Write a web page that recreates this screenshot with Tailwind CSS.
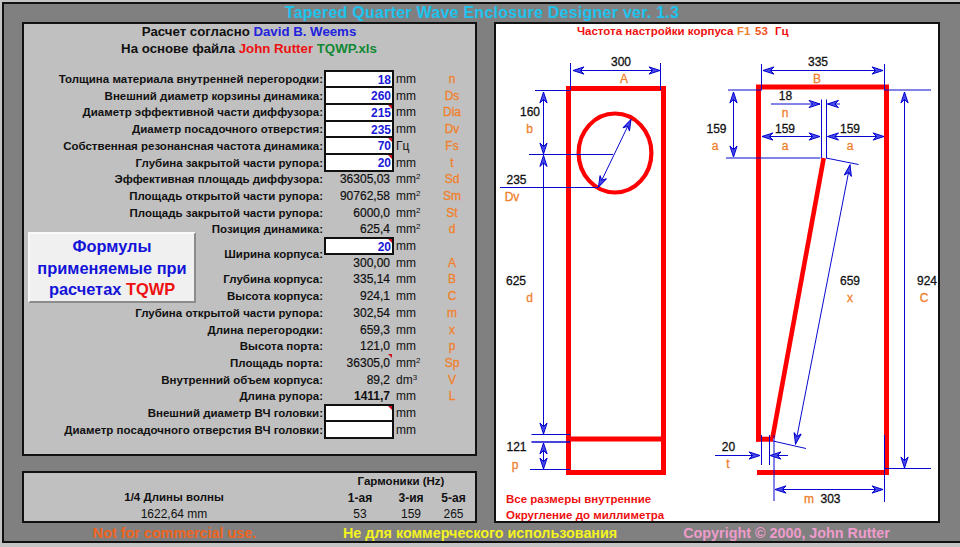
<!doctype html>
<html><head><meta charset="utf-8"><script src="https://cdn.jsdelivr.net/npm/@tailwindcss/browser@4"></script></head>
<body class="m-0 overflow-hidden">
<div class="w-[960px] h-[547px] overflow-hidden bg-[#c4c4c4] pt-[2px] pl-[2px] pb-[4px] font-['Liberation_Sans',sans-serif] text-[12px] text-[#111]">
<div class="h-[541px] border-t-2 border-l-2 border-b-2 border-[#111] bg-[#808080] flex flex-col">
  <div class="h-[18px] shrink-0 flex items-center justify-center text-[16px] font-bold text-[#1cc3ee] tracking-[0.25px]">Tapered Quarter Wave Enclosure Designer ver. 1.3</div>
  <div class="flex gap-[17px] pl-[18px] h-[501px] shrink-0">
    <div class="w-[455px] flex flex-col gap-[15px]">
      <div class="relative h-[434px] border-2 border-[#111] bg-[#c0c0c0]">
        <div class="h-[46.65px] text-[13.25px] font-bold text-center leading-[16.5px] pr-[1px]">
          <div>Расчет согласно <span class="text-[#2222dd]">David B. Weems</span></div>
          <div>На основе файла <span class="text-[#ee1111]">John Rutter</span> <span class="text-[#118833]">TQWP.xls</span></div>
        </div>
        <div class="grid grid-cols-[301px_68px_37px_44px] auto-rows-[16.71px] items-center leading-[16px]">
          <div class="text-right pr-[2px] font-bold text-[11.5px]">Толщина материала внутренней перегородки:</div><div class="relative -m-[1px] h-[18.7px] border-2 border-[#111] bg-white text-right pr-[1px] font-bold text-[#1a1ad8]">18</div><div class="pl-[3px]">mm</div><div class="text-center [-webkit-text-stroke:0.3px] text-[#f0802c]">n</div>
          <div class="text-right pr-[2px] font-bold text-[11.5px]">Внешний диаметр корзины динамика:</div><div class="relative -m-[1px] h-[18.7px] border-2 border-[#111] bg-white text-right pr-[1px] font-bold text-[#1a1ad8]">260</div><div class="pl-[3px]">mm</div><div class="text-center [-webkit-text-stroke:0.3px] text-[#f0802c]">Ds</div>
          <div class="text-right pr-[2px] font-bold text-[11.5px]">Диаметр эффективной части диффузора:</div><div class="relative -m-[1px] h-[18.7px] border-2 border-[#111] bg-white text-right pr-[1px] font-bold text-[#1a1ad8]">215<span class="absolute top-0 right-0 w-0 h-0 border-t-[4px] border-l-[4px] border-t-[#d01020] border-l-transparent"></span></div><div class="pl-[3px]">mm</div><div class="text-center [-webkit-text-stroke:0.3px] text-[#f0802c]">Dia</div>
          <div class="text-right pr-[2px] font-bold text-[11.5px]">Диаметр посадочного отверстия:</div><div class="relative -m-[1px] h-[18.7px] border-2 border-[#111] bg-white text-right pr-[1px] font-bold text-[#1a1ad8]">235</div><div class="pl-[3px]">mm</div><div class="text-center [-webkit-text-stroke:0.3px] text-[#f0802c]">Dv</div>
          <div class="text-right pr-[2px] font-bold text-[11.5px]">Собственная резонансная частота динамика:</div><div class="relative -m-[1px] h-[18.7px] border-2 border-[#111] bg-white text-right pr-[1px] font-bold text-[#1a1ad8]">70<span class="absolute top-0 right-0 w-0 h-0 border-t-[4px] border-l-[4px] border-t-[#d01020] border-l-transparent"></span></div><div class="pl-[3px]">Гц</div><div class="text-center [-webkit-text-stroke:0.3px] text-[#f0802c]">Fs</div>
          <div class="text-right pr-[2px] font-bold text-[11.5px]">Глубина закрытой части рупора:</div><div class="relative -m-[1px] h-[18.7px] border-2 border-[#111] bg-white text-right pr-[1px] font-bold text-[#1a1ad8]">20<span class="absolute top-0 right-0 w-0 h-0 border-t-[4px] border-l-[4px] border-t-[#d01020] border-l-transparent"></span></div><div class="pl-[3px]">mm</div><div class="text-center [-webkit-text-stroke:0.3px] text-[#f0802c]">t</div>
          <div class="text-right pr-[2px] font-bold text-[11.5px]">Эффективная площадь диффузора:</div><div class="text-right pr-[3px] [-webkit-text-stroke:0.2px]">36305,03</div><div class="pl-[3px]">mm<sup class="text-[8px]">2</sup></div><div class="text-center [-webkit-text-stroke:0.3px] text-[#f0802c]">Sd</div>
          <div class="text-right pr-[2px] font-bold text-[11.5px]">Площадь открытой части рупора:</div><div class="text-right pr-[3px] [-webkit-text-stroke:0.2px]">90762,58</div><div class="pl-[3px]">mm<sup class="text-[8px]">2</sup></div><div class="text-center [-webkit-text-stroke:0.3px] text-[#f0802c]">Sm</div>
          <div class="text-right pr-[2px] font-bold text-[11.5px]">Площадь закрытой части рупора:</div><div class="text-right pr-[3px] [-webkit-text-stroke:0.2px]">6000,0</div><div class="pl-[3px]">mm<sup class="text-[8px]">2</sup></div><div class="text-center [-webkit-text-stroke:0.3px] text-[#f0802c]">St</div>
          <div class="text-right pr-[2px] font-bold text-[11.5px]">Позиция динамика:</div><div class="text-right pr-[3px] [-webkit-text-stroke:0.2px]">625,4</div><div class="pl-[3px]">mm<sup class="text-[8px]">2</sup></div><div class="text-center [-webkit-text-stroke:0.3px] text-[#f0802c]">d</div>
          <div class="row-span-2 text-right pr-[2px] font-bold text-[11.5px]">Ширина корпуса:</div><div class="relative -m-[1px] h-[18.7px] border-2 border-[#111] bg-white text-right pr-[1px] font-bold text-[#1a1ad8]">20<span class="absolute top-0 right-0 w-0 h-0 border-t-[4px] border-l-[4px] border-t-[#d01020] border-l-transparent"></span></div><div class="pl-[3px]">mm</div><div></div>
          <div class="text-right pr-[3px] [-webkit-text-stroke:0.2px]">300,00</div><div class="pl-[3px]">mm</div><div class="text-center [-webkit-text-stroke:0.3px] text-[#f0802c]">A</div>
          <div class="text-right pr-[2px] font-bold text-[11.5px]">Глубина корпуса:</div><div class="text-right pr-[3px] [-webkit-text-stroke:0.2px]">335,14</div><div class="pl-[3px]">mm</div><div class="text-center [-webkit-text-stroke:0.3px] text-[#f0802c]">B</div>
          <div class="text-right pr-[2px] font-bold text-[11.5px]">Высота корпуса:</div><div class="text-right pr-[3px] [-webkit-text-stroke:0.2px]">924,1</div><div class="pl-[3px]">mm</div><div class="text-center [-webkit-text-stroke:0.3px] text-[#f0802c]">C</div>
          <div class="text-right pr-[2px] font-bold text-[11.5px]">Глубина открытой части рупора:</div><div class="text-right pr-[3px] [-webkit-text-stroke:0.2px]">302,54</div><div class="pl-[3px]">mm</div><div class="text-center [-webkit-text-stroke:0.3px] text-[#f0802c]">m</div>
          <div class="text-right pr-[2px] font-bold text-[11.5px]">Длина перегородки:</div><div class="text-right pr-[3px] [-webkit-text-stroke:0.2px]">659,3</div><div class="pl-[3px]">mm</div><div class="text-center [-webkit-text-stroke:0.3px] text-[#f0802c]">x</div>
          <div class="text-right pr-[2px] font-bold text-[11.5px]">Высота порта:</div><div class="text-right pr-[3px] [-webkit-text-stroke:0.2px]">121,0</div><div class="pl-[3px]">mm</div><div class="text-center [-webkit-text-stroke:0.3px] text-[#f0802c]">p</div>
          <div class="text-right pr-[2px] font-bold text-[11.5px]">Площадь порта:</div><div class="relative text-right pr-[3px] [-webkit-text-stroke:0.2px]">36305,0<span class="absolute -top-[1px] right-[1px] w-0 h-0 border-t-[4px] border-l-[4px] border-t-[#d01020] border-l-transparent"></span></div><div class="pl-[3px]">mm<sup class="text-[8px]">2</sup></div><div class="text-center [-webkit-text-stroke:0.3px] text-[#f0802c]">Sp</div>
          <div class="text-right pr-[2px] font-bold text-[11.5px]">Внутренний объем корпуса:</div><div class="text-right pr-[3px] [-webkit-text-stroke:0.2px]">89,2</div><div class="pl-[3px]">dm<sup class="text-[8px]">3</sup></div><div class="text-center [-webkit-text-stroke:0.3px] text-[#f0802c]">V</div>
          <div class="text-right pr-[2px] font-bold text-[11.5px]">Длина рупора:</div><div class="text-right pr-[3px] font-bold">1411,7</div><div class="pl-[3px]">mm</div><div class="text-center [-webkit-text-stroke:0.3px] text-[#f0802c]">L</div>
          <div class="text-right pr-[2px] font-bold text-[11.5px]">Внешний диаметр ВЧ головки:</div><div class="relative -m-[1px] h-[18.7px] border-2 border-[#111] bg-white"><span class="absolute top-0 right-0 w-0 h-0 border-t-[4px] border-l-[4px] border-t-[#d01020] border-l-transparent"></span></div><div class="pl-[3px]">mm</div><div></div>
          <div class="text-right pr-[2px] font-bold text-[11.5px]">Диаметр посадочного отверстия ВЧ головки:</div><div class="relative -m-[1px] h-[18.7px] border-2 border-[#111] bg-white"></div><div class="pl-[3px]">mm</div><div></div>
        </div>
        <div class="absolute left-[4px] top-[208px] w-[168px] h-[71px] bg-[#f0f0f0] border-2 border-t-[#fafafa] border-l-[#fafafa] border-r-[#8c8c8c] border-b-[#8c8c8c] flex flex-col items-center justify-center pt-[2px] text-[16.4px] font-bold leading-[21.5px] text-[#1414d8]">
          <div>Формулы</div><div>применяемые при</div><div>расчетах <span class="text-[#ee1111]">TQWP</span></div>
        </div>
      </div>
      <div class="h-[52px] border-2 border-[#111] bg-[#c0c0c0] grid grid-cols-[300px_72px_30px_49px] grid-rows-[16px_16px_15px] items-center text-center pt-[1px]">
        <div></div><div class="col-span-3 font-bold text-[11.5px] pl-[3px]">Гармоники (Hz)</div>
        <div class="font-bold text-[11.5px]">1/4 Длины волны</div><div class="font-bold">1-ая</div><div class="font-bold">3-ия</div><div class="font-bold pl-[6px]">5-ая</div>
        <div>1622,64 mm</div><div>53</div><div>159</div><div class="pl-[6px]">265</div>
      </div>
    </div>
    <div class="w-[446px] border-2 border-[#111] bg-white">
      <svg class="block w-[442px] h-[497px]" viewBox="496 24 442 497" font-size="12" font-family="Liberation Sans">
        <defs>
          <marker id="ah" viewBox="-12 -5 13 10" refX="0" refY="0" markerUnits="userSpaceOnUse" markerWidth="13" markerHeight="10" orient="auto-start-reverse">
            <path d="M0,0 L-11,-3.6 L-7.5,0 L-11,3.6 Z" fill="#4a4ae8" stroke="#0000d0" stroke-width="1"/>
          </marker>
        </defs>
        <rect x="568.5" y="88.5" width="95" height="384" fill="none" stroke="#ff0000" stroke-width="5"/>
        <line x1="566" y1="439" x2="666" y2="439" stroke="#ff0000" stroke-width="5"/>
        <ellipse cx="615" cy="153" rx="36.4" ry="39.5" fill="none" stroke="#ff0000" stroke-width="4.2"/>
        <path d="M758.5,441.5 V87 H886.5 V474.7" fill="none" stroke="#ff0000" stroke-width="5"/>
        <line x1="756" y1="439.2" x2="773" y2="439.2" stroke="#ff0000" stroke-width="5"/>
        <line x1="757" y1="472.4" x2="889" y2="472.4" stroke="#ff0000" stroke-width="5"/>
        <line x1="823.7" y1="158" x2="772.5" y2="438" stroke="#ff0000" stroke-width="4.6"/>
        <g stroke="#0808d0" stroke-width="1" fill="none">
          <path d="M570.5,63V90M660.5,63V90M535,90.5H570M529,154.5H613M500,187.5H598M531.5,434.5H570M530,469.5H570"/>
          <path d="M531.5,442H570" stroke-width="1.5"/>
          <line x1="573" y1="70.5" x2="660" y2="70.5" marker-start="url(#ah)" marker-end="url(#ah)"/>
          <line x1="543.5" y1="92" x2="543.5" y2="154" marker-start="url(#ah)" marker-end="url(#ah)"/>
          <line x1="543.5" y1="155.5" x2="543.5" y2="434" marker-start="url(#ah)" marker-end="url(#ah)"/>
          <line x1="543.5" y1="443" x2="543.5" y2="469" marker-start="url(#ah)" marker-end="url(#ah)"/>
          <line x1="631" y1="119.5" x2="598.5" y2="187" marker-start="url(#ah)" marker-end="url(#ah)"/>
          <path d="M761.5,64V90M884.5,64V90M728,90H762M884,90H931M726,158H820.5M821.5,99.5V158M826.5,99.5V158M826,158L858.5,164.5M773,441L806,448.5"/>
          <path d="M885,468.5H931M761.5,435V465M769.5,435V465M774,435V501M884.5,435V502M715,455.5H760"/>
          <line x1="763" y1="70.5" x2="883" y2="70.5" marker-start="url(#ah)" marker-end="url(#ah)"/>
          <line x1="733.5" y1="92" x2="733.5" y2="157" marker-start="url(#ah)" marker-end="url(#ah)"/>
          <line x1="771" y1="104" x2="820" y2="104" marker-end="url(#ah)"/>
          <line x1="840" y1="104" x2="827.5" y2="104" marker-end="url(#ah)"/>
          <line x1="762" y1="136.5" x2="820" y2="136.5" marker-start="url(#ah)" marker-end="url(#ah)"/>
          <line x1="827.5" y1="136.5" x2="884" y2="136.5" marker-start="url(#ah)" marker-end="url(#ah)"/>
          <line x1="850" y1="165" x2="795.5" y2="444" marker-start="url(#ah)" marker-end="url(#ah)"/>
          <line x1="904.5" y1="92" x2="904.5" y2="468" marker-start="url(#ah)" marker-end="url(#ah)"/>
          <line x1="750" y1="455.5" x2="760" y2="455.5" marker-end="url(#ah)"/>
          <line x1="788" y1="455.5" x2="770" y2="455.5" marker-end="url(#ah)"/>
          <line x1="775" y1="489.5" x2="883" y2="489.5" marker-start="url(#ah)" marker-end="url(#ah)"/>
        </g>
        <g fill="#111" stroke="#111" stroke-width="0.3" text-anchor="middle" dominant-baseline="central">
          <text x="621" y="61.5">300</text><text x="530" y="112">160</text><text x="516.5" y="180">235</text><text x="516" y="280.5">625</text><text x="516.5" y="447">121</text>
          <text x="716.5" y="129">159</text><text x="818" y="61.5">335</text><text x="785.5" y="95.5">18</text><text x="785" y="129">159</text><text x="850" y="129">159</text>
          <text x="850" y="280.5">659</text><text x="927" y="280.5">924</text><text x="728.5" y="447">20</text><text x="830.5" y="498.5">303</text>
        </g>
        <g fill="#f0802c" stroke="#f0802c" stroke-width="0.3" text-anchor="middle" dominant-baseline="central">
          <text x="624" y="79">A</text><text x="529.5" y="129">b</text><text x="512" y="197">Dv</text><text x="529.5" y="297.5">d</text><text x="515" y="464.5">p</text>
          <text x="715" y="146">a</text><text x="817" y="79">B</text><text x="785" y="112.5">n</text><text x="785" y="146">a</text><text x="850" y="146">a</text>
          <text x="850" y="297.5">x</text><text x="924" y="297.5">C</text><text x="728" y="464">t</text><text x="809" y="498.5">m</text>
        </g>
        <g font-weight="bold" font-size="11.5" dominant-baseline="central">
          <text x="577" y="31" fill="#ee1111">Частота настройки корпуса</text>
          <text x="737" y="31" fill="#f0802c">F1</text>
          <text x="755" y="31" fill="#f0501c">53</text>
          <text x="775" y="31" fill="#ee1111">Гц</text>
          <text x="506" y="499" fill="#ee1111">Все размеры внутренние</text>
          <text x="506" y="514.5" fill="#ee1111">Округление до миллиметра</text>
        </g>
      </svg>
    </div>
  </div>
  <div class="flex-1 flex items-center font-bold text-[14.35px] pl-[18px]">
    <div class="w-[305px] text-center text-[#f0641e]">Not for commercial use.</div>
    <div class="ml-[16px] text-[#f4f41e]">Не для коммерческого использования</div>
    <div class="ml-[66px] text-[#ee9ccc]">Copyright © 2000, John Rutter</div>
  </div>
</div>
</div>
</body></html>
